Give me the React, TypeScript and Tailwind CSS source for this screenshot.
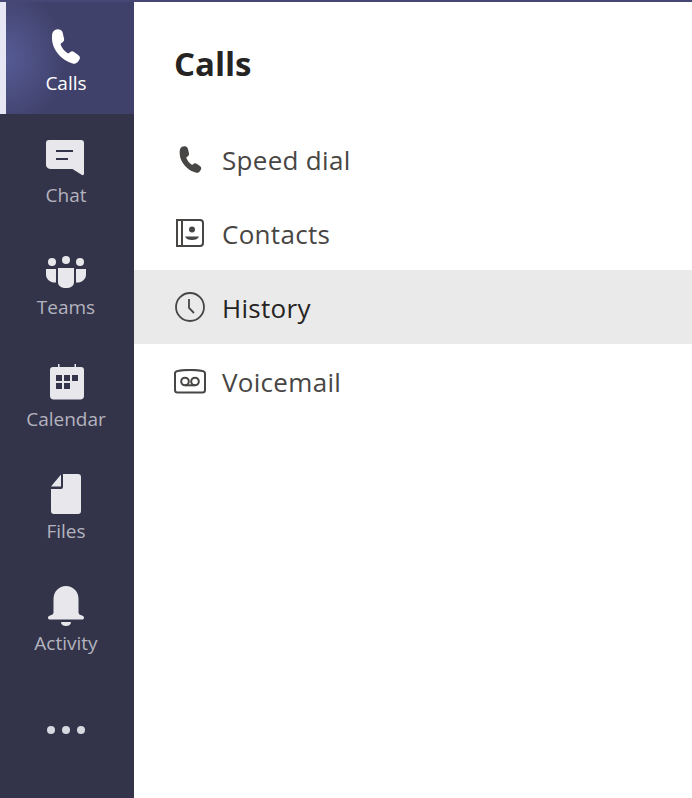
const font = 'font-["Open_Sans","Noto_Sans",sans-serif]';

function PhoneIcon({ className }: { className: string }) {
    return (
        <svg viewBox="0 0 28 35" className={className} fill="currentColor">
            <path d="M3 1C5-.2 9-.5 10.500 3L12 9.500c.4 1.800-.4 3-1.800 4l-1 .7c-.6.5-.7 1-.4 1.700 1.200 3.200 3.500 6 6.500 8 .6.4 1.200.4 1.800 0l1.200-1c1.200-.9 2.500-.8 3.700 0l4.200 3c2 1.400 2.200 3.500.8 5.400l-.9 1.300c-1.300 1.800-3.300 2.400-5.400 1.800C13 32.500 6.500 27 2.500 19.500 .7 15.800-.3 11.500 0 6.500.2 4 1 2.200 3 1Z" />
        </svg>
    );
}

function ChatIcon() {
    return (
        <svg viewBox="0 0 38 36" className="w-[38px] h-[36px] text-[#e8e8ec] -ml-[2px]" fill="currentColor">
            <path d="M3 0h32a3 3 0 0 1 3 3v30.500c0 1.500-1.200 2.200-2.400 1.300L26.500 29H5c-3 0-5-1.600-5-4.500V3a3 3 0 0 1 3-3Z" />
            <rect x="10" y="10" width="17" height="2" fill="#33344a" />
            <rect x="10" y="18" width="12" height="2" fill="#33344a" />
        </svg>
    );
}

function TeamsIcon() {
    return (
        <svg viewBox="0 0 40 32" className="w-[40px] h-[32px] text-[#e8e8ec] mt-[4px]" fill="currentColor">
            <circle cx="6" cy="6" r="4" />
            <circle cx="20" cy="4" r="4" />
            <circle cx="34" cy="6" r="4" />
            <path d="M0 13h10v13.500C4.500 27 0 23.500 0 18.500Z" />
            <path d="M30 13h10v5.500c0 5-4.500 8.500-10 8Z" />
            <path d="M12 12h16v14c0 4-3.500 6-8 6s-8-2-8-6Z" />
        </svg>
    );
}

function CalendarIcon() {
    return (
        <svg viewBox="0 0 34 36" className="w-[34px] h-[36px] text-[#e8e8ec] ml-[2px]" fill="currentColor">
            <rect x="8" y="0" width="1.500" height="5" />
            <rect x="24.500" y="0" width="1.500" height="5" />
            <path d="M3 3h28a3 3 0 0 1 3 3v26c0 2-1.500 3.500-3.500 3.500h-27C1.500 35.500 0 34 0 32V6a3 3 0 0 1 3-3Z" />
            <g fill="#33344a">
                <rect x="6" y="11" width="6" height="6" />
                <rect x="14" y="11" width="6" height="6" />
                <rect x="22" y="11" width="6" height="6" />
                <rect x="6" y="19" width="6" height="6" />
                <rect x="14" y="19" width="6" height="6" />
            </g>
        </svg>
    );
}

function FilesIcon() {
    return (
        <svg viewBox="0 0 30 40" className="w-[30px] h-[40px] text-[#e8e8ec]" fill="currentColor">
            <path d="M12 13V0h15a3 3 0 0 1 3 3v34a3 3 0 0 1-3 3H3a3 3 0 0 1-3-3V15h10a2 2 0 0 0 2-2Z" />
            <path d="M10 0.500V12.500H0Z" />
        </svg>
    );
}

function BellIcon() {
    return (
        <svg viewBox="0 0 36 40" className="w-[36px] h-[40px] text-[#e8e8ec]" fill="currentColor">
            <path d="M18 0c7 0 12.500 5.500 12.500 13v13.500c0 1.500 1.500 2.500 3.500 3 1.500.4 2 1.500 2 2.200 0 1-.8 1.800-2 1.800H2c-1.200 0-2-.8-2-1.800 0-.7.5-1.800 2-2.200 2-.5 3.500-1.500 3.500-3V13C5.500 5.500 11 0 18 0Z" />
            <path d="M13 36h10c0 2.500-2.200 4-5 4s-5-1.500-5-4Z" />
        </svg>
    );
}

function ContactsIcon() {
    return (
        <svg viewBox="0 0 28 28" className="w-[28px] h-[28px]" fill="none" stroke="currentColor" strokeWidth="2">
            <path d="M1 1h23a3 3 0 0 1 3 3v20a3 3 0 0 1-3 3H1Z" />
            <path d="M6 1v26" />
            <circle cx="16" cy="10.500" r="3" fill="currentColor" stroke="none" />
            <path d="M9 17.500h14c-.8 2.500-3.500 3.500-7 3.500s-6.200-1-7-3.500Z" fill="currentColor" stroke="none" />
        </svg>
    );
}

function ClockIcon() {
    return (
        <svg viewBox="0 0 30 30" className="w-[30px] h-[30px]" fill="none" stroke="currentColor" strokeWidth="1.800">
            <circle cx="15" cy="15" r="14" />
            <path d="M14 7v9l5 5" />
        </svg>
    );
}

function VoicemailIcon() {
    return (
        <svg viewBox="0 0 32 25" className="w-[32px] h-[25px]" fill="none" stroke="currentColor" strokeWidth="2">
            <path d="M3.500 2C12 .5 20 .5 28.500 2 30 2.200 31 3.300 31 4.700v16.300c0 1.400-1.100 2.500-2.500 2.500h-25C2.100 23.500 1 22.400 1 21V4.700C1 3.300 2 2.200 3.500 2Z" />
            <circle cx="11" cy="12.500" r="3.800" />
            <circle cx="21" cy="12.500" r="3.800" />
            <path d="M11 16.300h10" />
        </svg>
    );
}

function NavItem({ label, icon, active }: { label: string; icon: React.ReactNode; active?: boolean }) {
    return (
        <div className={active
            ? "relative h-[112px] flex flex-col items-center pt-[24px] pr-[2px] bg-[radial-gradient(ellipse_60px_70px_at_6px_50%,#565b96_0%,#40416a_100%)] text-white"
            : "relative h-[112px] flex flex-col items-center pt-[24px] pr-[2px] text-[#b3b3bf]"}>
            {active && <div className="absolute left-0 inset-y-0 w-[6px] bg-[#e6e6f5]" />}
            <div className="h-[40px] flex items-center justify-center">{icon}</div>
            <span className="mt-[5px] text-[19px] leading-[24px]">{label}</span>
        </div>
    );
}

function Row({ label, icon, active }: { label: string; icon: React.ReactNode; active?: boolean }) {
    return (
        <div className={active
            ? "h-[74px] flex items-center bg-[#ebeaea] text-[#252423] pl-[40px]"
            : "h-[74px] flex items-center text-[#484644] pl-[40px]"}>
            <div className="w-[32px] flex justify-center text-[#484644]">{icon}</div>
            <span className="ml-[16px] pt-[2px] text-[26px] leading-[36px] tracking-[0.3px]">{label}</span>
        </div>
    );
}

export default function App() {
    return (
        <div className={`w-[692px] h-[798px] flex flex-col overflow-hidden bg-white ${font}`}>
            <div className="h-[2px] bg-[#464775]" />
            <div className="flex-1 flex">

                {/* Sidebar */}
                <div className="w-[134px] bg-[#33344a] flex flex-col">
                    <NavItem label="Calls" active icon={<PhoneIcon className="w-[28px] h-[35px] text-white" />} />
                    <NavItem label="Chat" icon={<ChatIcon />} />
                    <NavItem label="Teams" icon={<TeamsIcon />} />
                    <NavItem label="Calendar" icon={<CalendarIcon />} />
                    <NavItem label="Files" icon={<FilesIcon />} />
                    <NavItem label="Activity" icon={<BellIcon />} />
                    <div className="flex justify-center gap-[7px] mt-[52px] pr-[2px]">
                        <span className="w-[8px] h-[8px] rounded-full bg-[#d8d8e0]" />
                        <span className="w-[8px] h-[8px] rounded-full bg-[#d8d8e0]" />
                        <span className="w-[8px] h-[8px] rounded-full bg-[#d8d8e0]" />
                    </div>
                </div>

                {/* Calls list */}
                <div className="flex-1">
                    <h1 className="pl-[40px] pt-[38px] h-[120px] text-[33px] leading-[48px] font-bold text-[#252423]">Calls</h1>
                    <Row label="Speed dial" icon={<PhoneIcon className="w-[23px] h-[27px]" />} />
                    <Row label="Contacts" icon={<ContactsIcon />} />
                    <Row label="History" active icon={<ClockIcon />} />
                    <Row label="Voicemail" icon={<VoicemailIcon />} />
                </div>
            </div>
        </div>
    );
}
